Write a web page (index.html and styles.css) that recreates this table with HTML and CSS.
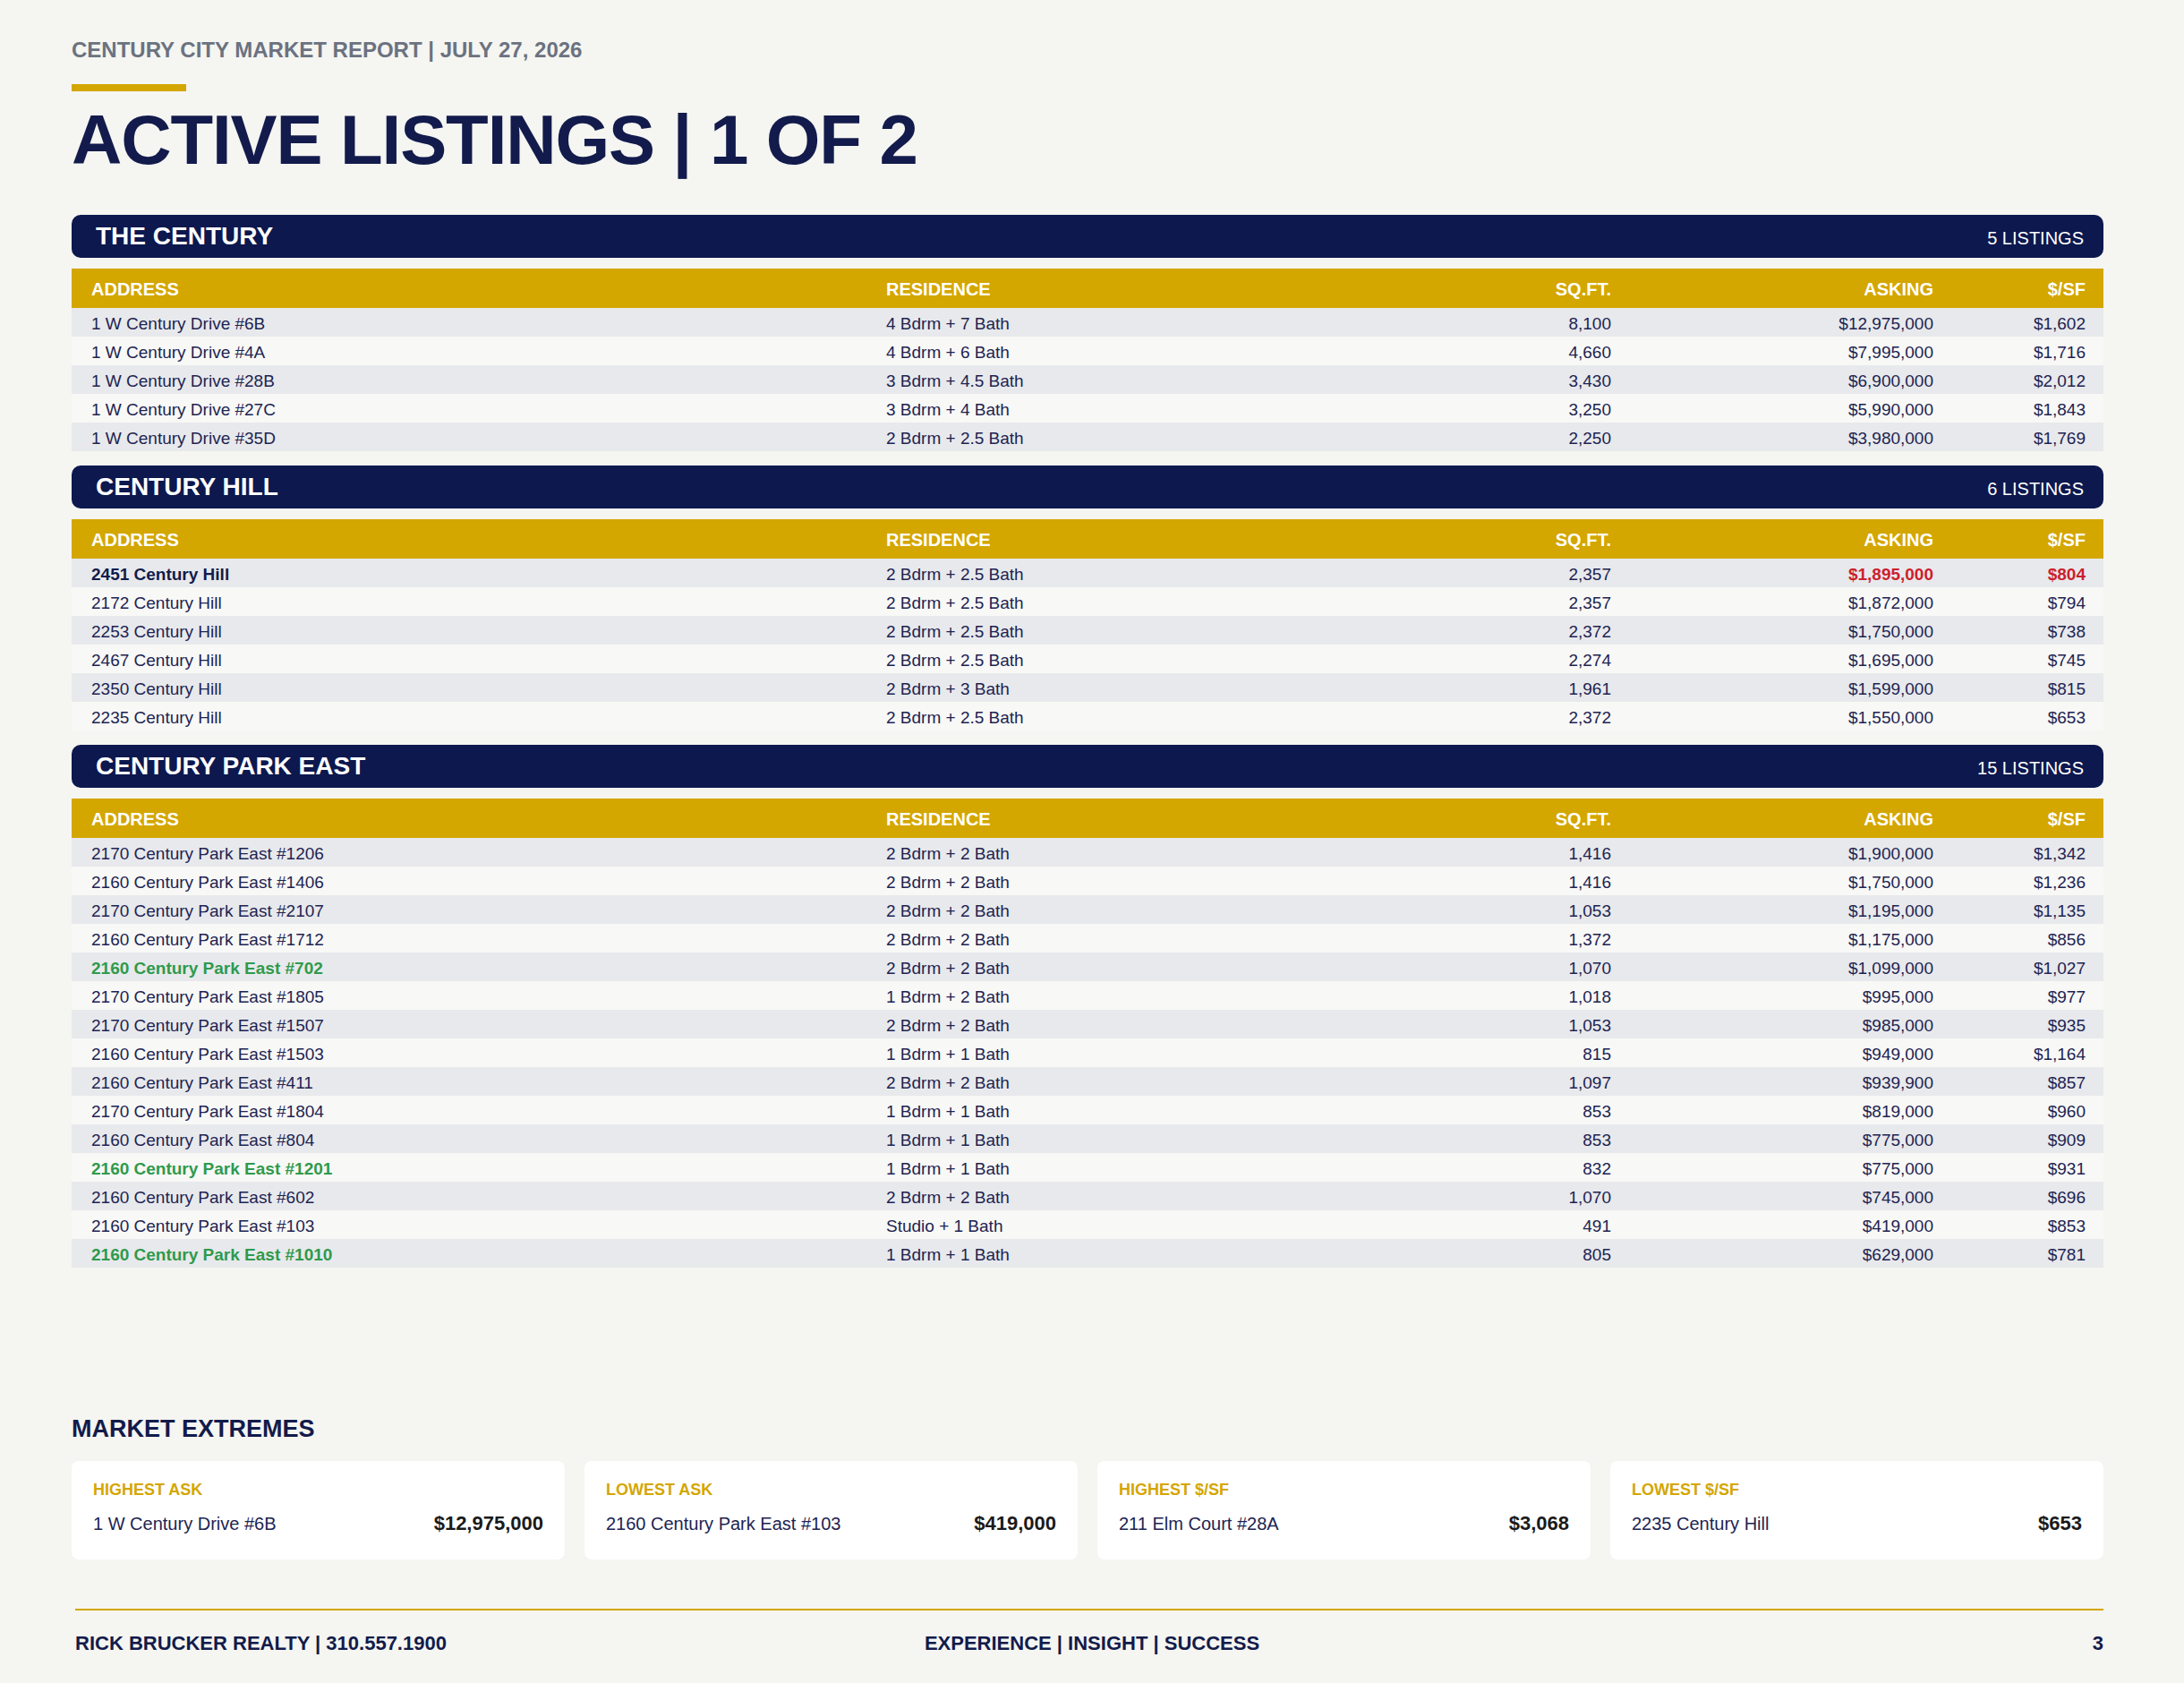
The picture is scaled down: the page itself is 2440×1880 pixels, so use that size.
FILE: index.html
```html
<!DOCTYPE html>
<html lang="en">
<head>
<meta charset="utf-8">
<title>Active Listings | 1 of 2</title>
<link rel="stylesheet" href="styles.css">
</head>
<body>
<div class="page">
  <header class="page-head">
    <div class="report-tag">CENTURY CITY MARKET REPORT | JULY 27, 2026</div>
    <div class="accent-bar"></div>
    <h1 class="page-title">ACTIVE LISTINGS | 1 OF 2</h1>
  </header>

  <section class="building">
    <div class="section-bar"><span class="section-name">THE CENTURY</span><span class="section-count">5 LISTINGS</span></div>
    <div class="listing-table">
      <div class="trow thead"><span>ADDRESS</span><span>RESIDENCE</span><span class="num">SQ.FT.</span><span class="num">ASKING</span><span class="num">$/SF</span></div>
      <div class="trow"><span>1 W Century Drive #6B</span><span>4 Bdrm + 7 Bath</span><span class="num">8,100</span><span class="num">$12,975,000</span><span class="num">$1,602</span></div>
      <div class="trow"><span>1 W Century Drive #4A</span><span>4 Bdrm + 6 Bath</span><span class="num">4,660</span><span class="num">$7,995,000</span><span class="num">$1,716</span></div>
      <div class="trow"><span>1 W Century Drive #28B</span><span>3 Bdrm + 4.5 Bath</span><span class="num">3,430</span><span class="num">$6,900,000</span><span class="num">$2,012</span></div>
      <div class="trow"><span>1 W Century Drive #27C</span><span>3 Bdrm + 4 Bath</span><span class="num">3,250</span><span class="num">$5,990,000</span><span class="num">$1,843</span></div>
      <div class="trow"><span>1 W Century Drive #35D</span><span>2 Bdrm + 2.5 Bath</span><span class="num">2,250</span><span class="num">$3,980,000</span><span class="num">$1,769</span></div>
    </div>
  </section>

  <section class="building">
    <div class="section-bar"><span class="section-name">CENTURY HILL</span><span class="section-count">6 LISTINGS</span></div>
    <div class="listing-table">
      <div class="trow thead"><span>ADDRESS</span><span>RESIDENCE</span><span class="num">SQ.FT.</span><span class="num">ASKING</span><span class="num">$/SF</span></div>
      <div class="trow"><span class="strong">2451 Century Hill</span><span>2 Bdrm + 2.5 Bath</span><span class="num">2,357</span><span class="num alert">$1,895,000</span><span class="num alert">$804</span></div>
      <div class="trow"><span>2172 Century Hill</span><span>2 Bdrm + 2.5 Bath</span><span class="num">2,357</span><span class="num">$1,872,000</span><span class="num">$794</span></div>
      <div class="trow"><span>2253 Century Hill</span><span>2 Bdrm + 2.5 Bath</span><span class="num">2,372</span><span class="num">$1,750,000</span><span class="num">$738</span></div>
      <div class="trow"><span>2467 Century Hill</span><span>2 Bdrm + 2.5 Bath</span><span class="num">2,274</span><span class="num">$1,695,000</span><span class="num">$745</span></div>
      <div class="trow"><span>2350 Century Hill</span><span>2 Bdrm + 3 Bath</span><span class="num">1,961</span><span class="num">$1,599,000</span><span class="num">$815</span></div>
      <div class="trow"><span>2235 Century Hill</span><span>2 Bdrm + 2.5 Bath</span><span class="num">2,372</span><span class="num">$1,550,000</span><span class="num">$653</span></div>
    </div>
  </section>

  <section class="building">
    <div class="section-bar"><span class="section-name">CENTURY PARK EAST</span><span class="section-count">15 LISTINGS</span></div>
    <div class="listing-table">
      <div class="trow thead"><span>ADDRESS</span><span>RESIDENCE</span><span class="num">SQ.FT.</span><span class="num">ASKING</span><span class="num">$/SF</span></div>
      <div class="trow"><span>2170 Century Park East #1206</span><span>2 Bdrm + 2 Bath</span><span class="num">1,416</span><span class="num">$1,900,000</span><span class="num">$1,342</span></div>
      <div class="trow"><span>2160 Century Park East #1406</span><span>2 Bdrm + 2 Bath</span><span class="num">1,416</span><span class="num">$1,750,000</span><span class="num">$1,236</span></div>
      <div class="trow"><span>2170 Century Park East #2107</span><span>2 Bdrm + 2 Bath</span><span class="num">1,053</span><span class="num">$1,195,000</span><span class="num">$1,135</span></div>
      <div class="trow"><span>2160 Century Park East #1712</span><span>2 Bdrm + 2 Bath</span><span class="num">1,372</span><span class="num">$1,175,000</span><span class="num">$856</span></div>
      <div class="trow"><span class="new">2160 Century Park East #702</span><span>2 Bdrm + 2 Bath</span><span class="num">1,070</span><span class="num">$1,099,000</span><span class="num">$1,027</span></div>
      <div class="trow"><span>2170 Century Park East #1805</span><span>1 Bdrm + 2 Bath</span><span class="num">1,018</span><span class="num">$995,000</span><span class="num">$977</span></div>
      <div class="trow"><span>2170 Century Park East #1507</span><span>2 Bdrm + 2 Bath</span><span class="num">1,053</span><span class="num">$985,000</span><span class="num">$935</span></div>
      <div class="trow"><span>2160 Century Park East #1503</span><span>1 Bdrm + 1 Bath</span><span class="num">815</span><span class="num">$949,000</span><span class="num">$1,164</span></div>
      <div class="trow"><span>2160 Century Park East #411</span><span>2 Bdrm + 2 Bath</span><span class="num">1,097</span><span class="num">$939,900</span><span class="num">$857</span></div>
      <div class="trow"><span>2170 Century Park East #1804</span><span>1 Bdrm + 1 Bath</span><span class="num">853</span><span class="num">$819,000</span><span class="num">$960</span></div>
      <div class="trow"><span>2160 Century Park East #804</span><span>1 Bdrm + 1 Bath</span><span class="num">853</span><span class="num">$775,000</span><span class="num">$909</span></div>
      <div class="trow"><span class="new">2160 Century Park East #1201</span><span>1 Bdrm + 1 Bath</span><span class="num">832</span><span class="num">$775,000</span><span class="num">$931</span></div>
      <div class="trow"><span>2160 Century Park East #602</span><span>2 Bdrm + 2 Bath</span><span class="num">1,070</span><span class="num">$745,000</span><span class="num">$696</span></div>
      <div class="trow"><span>2160 Century Park East #103</span><span>Studio + 1 Bath</span><span class="num">491</span><span class="num">$419,000</span><span class="num">$853</span></div>
      <div class="trow"><span class="new">2160 Century Park East #1010</span><span>1 Bdrm + 1 Bath</span><span class="num">805</span><span class="num">$629,000</span><span class="num">$781</span></div>
    </div>
  </section>

  <section class="extremes">
    <h2 class="extremes-title">MARKET EXTREMES</h2>
    <div class="extremes-grid">
      <div class="card"><div class="card-label">HIGHEST ASK</div><div class="card-row"><span class="card-addr">1 W Century Drive #6B</span><span class="card-value">$12,975,000</span></div></div>
      <div class="card"><div class="card-label">LOWEST ASK</div><div class="card-row"><span class="card-addr">2160 Century Park East #103</span><span class="card-value">$419,000</span></div></div>
      <div class="card"><div class="card-label">HIGHEST $/SF</div><div class="card-row"><span class="card-addr">211 Elm Court #28A</span><span class="card-value">$3,068</span></div></div>
      <div class="card"><div class="card-label">LOWEST $/SF</div><div class="card-row"><span class="card-addr">2235 Century Hill</span><span class="card-value">$653</span></div></div>
    </div>
  </section>

  <footer class="page-foot">
    <span class="foot-left">RICK BRUCKER REALTY | 310.557.1900</span>
    <span class="foot-center">EXPERIENCE | INSIGHT | SUCCESS</span>
    <span class="foot-right">3</span>
  </footer>
</div>
</body>
</html>
```

FILE: styles.css
```css
html, body {
  margin: 0;
  padding: 0;
  background: #f5f5f1;
}

body {
  font-family: "Liberation Sans", Arial, Helvetica, sans-serif;
  color: #1d2452;
}

.page {
  width: 2440px;
  height: 1880px;
  box-sizing: border-box;
  padding: 41px 90px 32px 80px;
  display: flex;
  flex-direction: column;
}

.report-tag {
  font-size: 24px;
  line-height: 29px;
  font-weight: 700;
  color: #6b7280;
}

.accent-bar {
  width: 128px;
  height: 8px;
  background: #d4a600;
  margin-top: 24px;
}

.page-title {
  margin: 15px 0 45px;
  font-size: 78px;
  line-height: 78px;
  font-weight: 700;
  letter-spacing: -0.014em;
  color: #121b4b;
}

.building {
  margin-bottom: 16px;
}

.section-bar {
  height: 48px;
  box-sizing: border-box;
  padding: 0 22px 0 27px;
  background: #0c184e;
  border-radius: 10px;
  color: #ffffff;
  display: flex;
  align-items: center;
  justify-content: space-between;
  margin-bottom: 12px;
}

.section-name {
  font-size: 28px;
  font-weight: 700;
}

.section-count {
  font-size: 20px;
  padding-top: 5px;
}

.trow {
  display: grid;
  grid-template-columns: 888px 532px 320px 360px 170px;
  height: 32px;
  align-items: center;
  font-size: 19px;
  color: #1d2452;
}

.trow > span {
  padding: 3px 20px 0 22px;
  white-space: nowrap;
}

.trow:nth-child(even) {
  background: #e8e9ec;
}

.trow:nth-child(odd) {
  background: #f8f8f6;
}

.trow.thead {
  height: 44px;
  background: #d4a600;
  color: #ffffff;
  font-size: 20px;
  font-weight: 700;
}

.num {
  text-align: right;
}

.strong {
  font-weight: 700;
  color: #121b4b;
}

.alert {
  font-weight: 700;
  color: #cc1f2d;
}

.new {
  font-weight: 700;
  color: #2f9a4c;
}

.extremes {
  margin-top: auto;
}

.extremes-title {
  margin: 0 0 20px;
  font-size: 27px;
  line-height: 31px;
  font-weight: 700;
  color: #121b4b;
}

.extremes-grid {
  display: grid;
  grid-template-columns: repeat(4, 1fr);
  gap: 22px;
}

.card {
  height: 110px;
  box-sizing: border-box;
  padding: 21px 24px 0;
  background: #ffffff;
  border-radius: 8px;
}

.card-label {
  font-size: 18px;
  line-height: 22px;
  font-weight: 700;
  color: #d4a600;
}

.card-row {
  margin-top: 14px;
  display: flex;
  justify-content: space-between;
  align-items: baseline;
  line-height: 26px;
}

.card-addr {
  font-size: 20px;
  color: #1d2452;
}

.card-value {
  font-size: 22px;
  font-weight: 700;
  color: #1a1a1a;
}

.page-foot {
  margin: 55px 0 0 4px;
  border-top: 2px solid #d4a600;
  padding-top: 24px;
  display: grid;
  grid-template-columns: 1fr auto 1fr;
  font-size: 22px;
  line-height: 25px;
  font-weight: 700;
  color: #121b4b;
}

.foot-center {
  text-align: center;
  padding-left: 6px;
}

.foot-right {
  text-align: right;
}
```
